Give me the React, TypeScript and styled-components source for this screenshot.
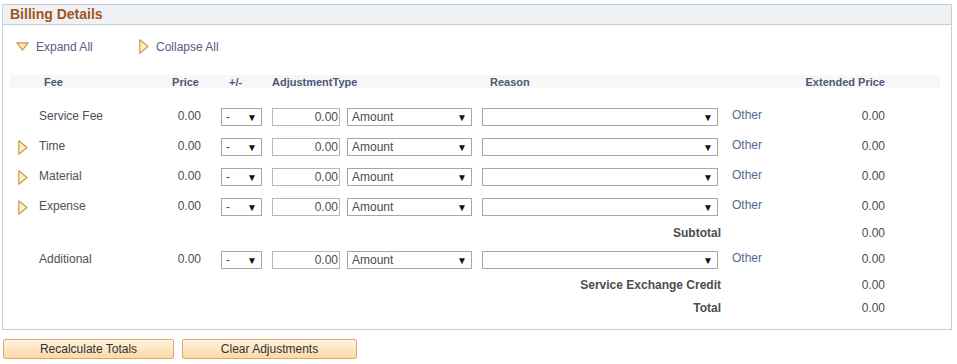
import { FC } from "react";
import styled, { createGlobalStyle } from "styled-components";

const GlobalStyle = createGlobalStyle`
  body {
    margin: 0;
    background: #ffffff;
    font-family: "Liberation Sans", Arial, sans-serif;
    font-size: 12px;
    color: #4d4d4d;
  }
`;

const COLUMNS = "25px 115px 52px 64px 78px 132px 246px 78px 89px 51px";

type FeeLine = { label: string; expandable: boolean };

const lines: FeeLine[] = [
  { label: "Service Fee", expandable: false },
  { label: "Time", expandable: true },
  { label: "Material", expandable: true },
  { label: "Expense", expandable: true },
];

const ExpandIcon: FC = () => (
  <svg width="13" height="9" viewBox="0 0 13 9">
    <path d="M0.8 0.8 H12.2 L6.5 8.2 Z" fill="#fde6a8" stroke="#c99a4e" strokeWidth="1.2" strokeLinejoin="round" />
  </svg>
);

const CollapseIcon: FC = () => (
  <svg width="10" height="15" viewBox="0 0 10 15">
    <path d="M0.8 0.8 L9 7.5 L0.8 14.2 Z" fill="#fff0c2" stroke="#c99a4e" strokeWidth="1.2" strokeLinejoin="round" />
  </svg>
);

const FakeSelect: FC<{ value?: string; width: number; offset: number }> = ({ value, width, offset }) => (
  <SelectBox $width={width} $offset={offset}>
    <span>{value}</span>
    <Arrow>▼</Arrow>
  </SelectBox>
);

const AdjustRow: FC<{ line: FeeLine; tall?: boolean }> = ({ line, tall }) => (
  <Row $height={tall ? 28 : 30}>
    <Expander>{line.expandable && <CollapseIcon />}</Expander>
    <Label>{line.label}</Label>
    <Num $pad={1}>0.00</Num>
    <div>
      <FakeSelect value="-" width={41} offset={19} />
    </div>
    <div>
      <AmountInput>0.00</AmountInput>
    </div>
    <div>
      <FakeSelect value="Amount" width={125} offset={3} />
    </div>
    <div>
      <FakeSelect width={236} offset={6} />
    </div>
    <Other>Other</Other>
    <Num $pad={4}>0.00</Num>
  </Row>
);

const TotalRow: FC<{ label: string; height: number }> = ({ label, height }) => (
  <Row $height={height}>
    <TotalLabel>{label}</TotalLabel>
    <span />
    <Num $pad={4}>0.00</Num>
  </Row>
);

export default function App() {
  return (
    <Page>
      <GlobalStyle />
      <Panel>
        <PanelTitle>Billing Details</PanelTitle>
        <PanelBody>
          <Toolbar>
            <ToolLink $width={123}>
              <ExpandIcon />
              Expand All
            </ToolLink>
            <ToolLink>
              <CollapseIcon />
              Collapse All
            </ToolLink>
          </Toolbar>
          <HeaderRow>
            <span />
            <Head $pad={9}>Fee</Head>
            <Head $right $pad={3}>Price</Head>
            <Head $pad={27}>+/-</Head>
            <Head $pad={6}>AdjustmentType</Head>
            <span />
            <Head $pad={14}>Reason</Head>
            <span />
            <Head $right $pad={4}>Extended Price</Head>
          </HeaderRow>
          <Rows>
            {lines.map((line) => (
              <AdjustRow key={line.label} line={line} />
            ))}
            <TotalRow label="Subtotal" height={24} />
            <AdjustRow line={{ label: "Additional", expandable: false }} tall />
            <TotalRow label="Service Exchange Credit" height={24} />
            <TotalRow label="Total" height={22} />
          </Rows>
        </PanelBody>
      </Panel>
      <Buttons>
        <Button $width={171}>Recalculate Totals</Button>
        <Button $width={175}>Clear Adjustments</Button>
      </Buttons>
    </Page>
  );
}

const Page = styled.div`
  padding: 4px 6px 0 2px;
  width: 950px;
`;

const Panel = styled.section`
  box-sizing: border-box;
  width: 950px;
  border: 1px solid #c9ced3;
`;

const PanelTitle = styled.h2`
  margin: 0;
  height: 19px;
  line-height: 18px;
  padding-left: 7px;
  background: #eff2f4;
  border-bottom: 1px solid #c9ced3;
  font-size: 14px;
  font-weight: bold;
  color: #a3541b;
`;

const PanelBody = styled.div`
  padding: 0 0 10px 7px;
`;

const Toolbar = styled.div`
  display: flex;
  align-items: center;
  height: 50px;
  padding-left: 6px;
  box-sizing: border-box;
  padding-bottom: 7px;
`;

const ToolLink = styled.a<{ $width?: number }>`
  display: flex;
  align-items: center;
  gap: 7px;
  width: ${(p) => (p.$width ? `${p.$width}px` : "auto")};
  color: #55607f;
  font-size: 12px;
  cursor: pointer;
`;

const HeaderRow = styled.div`
  display: grid;
  grid-template-columns: ${COLUMNS};
  width: 930px;
  height: 13px;
  background: #f7f7f7;
  align-items: center;
  margin-bottom: 13px;
`;

const Head = styled.span<{ $right?: boolean; $pad: number }>`
  font-size: 11px;
  font-weight: bold;
  color: #4b5877;
  white-space: nowrap;
  text-align: ${(p) => (p.$right ? "right" : "left")};
  padding-${(p) => (p.$right ? "right" : "left")}: ${(p) => p.$pad}px;
`;

const Rows = styled.div`
  display: flex;
  flex-direction: column;
  width: 930px;
`;

const Row = styled.div<{ $height: number }>`
  display: grid;
  grid-template-columns: ${COLUMNS};
  height: ${(p) => p.$height}px;
  align-items: center;
`;

const Expander = styled.span`
  display: flex;
  padding-left: 8px;
  padding-top: 2px;
`;

const Label = styled.span`
  padding-left: 4px;
  color: #50505a;
`;

const Num = styled.span<{ $pad: number }>`
  text-align: right;
  padding-right: ${(p) => p.$pad}px;
  color: #4d4d4d;
`;

const Other = styled.span`
  padding-left: 10px;
  color: #566a8e;
  margin-top: -3px;
`;

const SelectBox = styled.div<{ $width: number; $offset: number }>`
  box-sizing: border-box;
  display: flex;
  align-items: center;
  justify-content: space-between;
  width: ${(p) => p.$width}px;
  margin-left: ${(p) => p.$offset}px;
  height: 18px;
  padding: 0 4px 0 4px;
  border: 1px solid #a6a6a6;
  background: #ffffff;
  color: #4d4d4d;
  font-size: 12px;
  margin-top: 2px;
`;

const Arrow = styled.span`
  font-size: 10px;
  color: #111111;
`;

const AmountInput = styled.div`
  box-sizing: border-box;
  width: 68px;
  height: 18px;
  margin-left: 6px;
  margin-top: 2px;
  padding-right: 1px;
  line-height: 16px;
  text-align: right;
  border: 1px solid #b8b8b8;
  color: #4d4d4d;
`;

const TotalLabel = styled.span`
  grid-column: 1 / 8;
  text-align: right;
  padding-right: 1px;
  font-weight: bold;
  color: #4d4d4d;
`;

const Buttons = styled.div`
  display: flex;
  gap: 8px;
  margin: 9px 0 0 1px;
`;

const Button = styled.button<{ $width: number }>`
  width: ${(p) => p.$width}px;
  height: 20px;
  padding: 0;
  border: 1px solid #e3a76d;
  border-radius: 2px;
  background: linear-gradient(#fff3df, #fbd8a7);
  font-family: "Liberation Sans", Arial, sans-serif;
  font-size: 12px;
  color: #333333;
`;
